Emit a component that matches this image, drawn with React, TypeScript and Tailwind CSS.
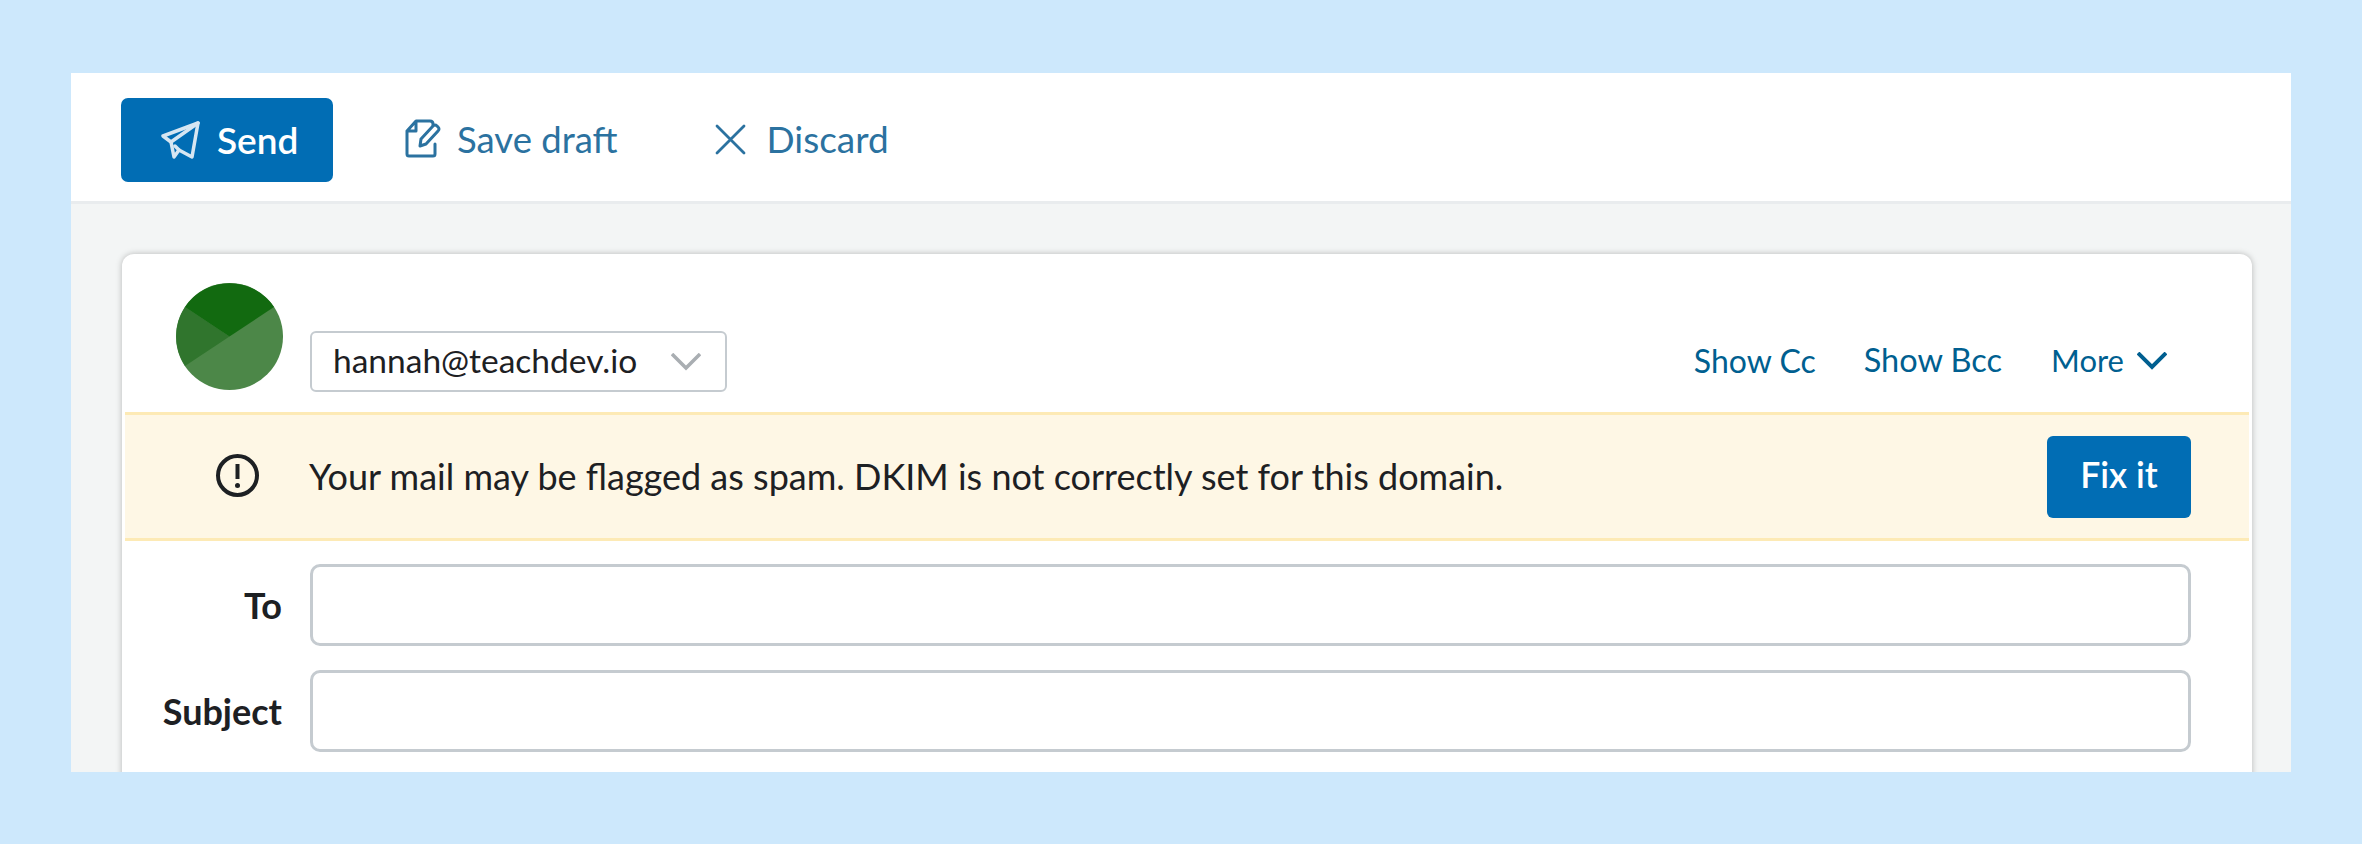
export default function App() {
  return (
    <div className="h-[844px] overflow-hidden bg-[#cde8fc] px-[71px] pt-[73px] font-['Lato',sans-serif] text-[#1d2023]">
      <div className="flex h-[699px] flex-col overflow-hidden bg-[#f3f5f5]">
        <div className="flex h-[131px] shrink-0 items-center border-b-[3px] border-[#e9ecee] bg-white pl-[50px] pt-[6px]">
          <button className="flex h-[84px] w-[212px] items-center gap-[17px] rounded-[7px] bg-[#016db4] pl-[40px] text-[37px] font-semibold text-white">
            <svg width="39" height="38" viewBox="0 0 39 38" fill="none" stroke="#d6e6f2" strokeWidth="3.5" strokeLinejoin="round" strokeLinecap="round"><path d="M37 2 2 15l8 6 3 15 5-7 13 7z" /><path d="M37 2 10 21M14 25l4 4" /></svg>
            Send
          </button>
          <button className="ml-[72px] flex items-center gap-[16px] pb-[2px] text-[36.5px] text-[#2b72a0]">
            <svg width="36" height="40" viewBox="0 0 36 40" fill="none" stroke="#2b72a0" strokeWidth="3" strokeLinejoin="round" strokeLinecap="round"><path d="M2 12 11 2h14q3 0 3 3v1M2 12v23q0 2 2 2h24q2 0 2-2V25M11 2v10H2" /><path d="m15 27 1-7L28 7q2-2 4 0l1 1q2 2 0 4L21 25z" /></svg>
            Save draft
          </button>
          <button className="ml-[97px] flex items-center gap-[21px] pb-[2px] text-[37px] text-[#2b72a0]">
            <svg width="31" height="31" viewBox="0 0 31 31" fill="none" stroke="#2b72a0" strokeWidth="2.8" strokeLinecap="round"><path d="m2 2 27 27M29 2 2 29" /></svg>
            Discard
          </button>
        </div>
        <div className="flex-1 pl-[51px] pr-[39px] pt-[50px]">
          <div className="h-[600px] rounded-t-[12px] bg-white px-[3px] shadow-[0_0_6px_rgba(0,0,0,0.25)]">
            <div className="flex h-[158px] items-end pb-[20px] pl-[51px] pr-[82px]">
              <svg className="mb-[2px]" width="107" height="107" viewBox="0 0 107 107">
                <circle cx="53.5" cy="53.5" r="53.5" fill="#4c8748" />
                <path d="M53.5 53.5 9 24A53.5 53.5 0 0 0 9 83z" fill="#30752d" />
                <path d="M53.5 53.5 9 24A53.5 53.5 0 0 1 98 24z" fill="#126a10" />
              </svg>
              <div className="ml-[27px] flex h-[61px] w-[417px] items-center justify-between rounded-[6px] border-2 border-[#c5cbd0] pb-[3px] pl-[21px] pr-[24px] text-[33.5px]">
                hannah@teachdev.io
                <svg className="mt-[3px]" width="30" height="18" viewBox="0 0 30 18" fill="none" stroke="#a9aeb2" strokeWidth="3.5"><path d="m1 1 14 14L29 1" /></svg>
              </div>
              <div className="ml-auto flex h-[61px] items-center pb-[2px] text-[32px] text-[#005f90]">
                <span>Show Cc</span>
                <span className="ml-[48px] text-[32.5px]">Show Bcc</span>
                <span className="ml-[49px] flex items-center gap-[13px]">
                  <span className="text-[31px]">More</span>
                  <svg width="30" height="18" viewBox="0 0 30 18" fill="none" stroke="#005f90" strokeWidth="4"><path d="m1 1 14 14L29 1" /></svg>
                </span>
              </div>
            </div>
            <div className="flex h-[129px] items-center border-y-[3px] border-[#fdeab5] bg-[#fef7e5] pl-[91px] pr-[58px]">
              <svg className="-mt-[2px]" width="43" height="43" viewBox="0 0 43 43" fill="none" stroke="#1d2023"><circle cx="21.5" cy="21.5" r="19.5" strokeWidth="4" /><path d="M21.5 10v15" strokeWidth="4" /><circle cx="21.5" cy="31.5" r="2.5" fill="#1d2023" stroke="none" /></svg>
              <span className="ml-[50px] pb-[2px] text-[36px]">Your mail may be flagged as spam. DKIM is not correctly set for this domain.</span>
              <button className="ml-auto h-[82px] w-[144px] rounded-[6px] bg-[#016db4] pb-[3px] text-[35.5px] font-semibold text-white">Fix it</button>
            </div>
            <div className="flex flex-col gap-[24px] pr-[58px] pt-[23px]">
              {["To", "Subject"].map((l) => (
                <div key={l} className="flex items-center">
                  <label className="mr-[28px] w-[157px] pb-[1px] text-right text-[36px] font-bold">{l}</label>
                  <div className="h-[82px] flex-1 rounded-[10px] border-[3px] border-[#c5cbd0]" />
                </div>
              ))}
            </div>
          </div>
        </div>
      </div>
    </div>
  );
}
